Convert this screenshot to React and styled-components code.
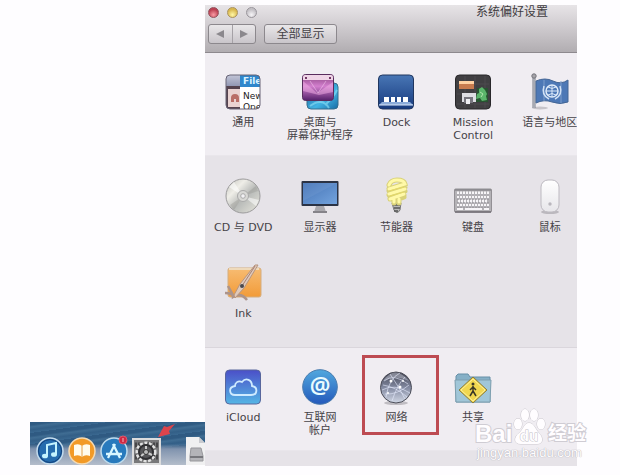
import React from "react";
import styled, { createGlobalStyle, css } from "styled-components";

const GlobalStyle = createGlobalStyle`
  *, *::before, *::after { box-sizing: border-box; }
  body {
    margin: 0;
    background: #fefdff;
    color: #454247;
    font-family: "DejaVu Sans", "Noto Sans CJK SC", sans-serif;
    font-size: 11px;
    overflow: hidden;
  }
  button { font: inherit; color: inherit; border: 0; padding: 0; background: none; }
`;

const Page = styled.main`
  position: relative;
  display: flex;
  align-items: flex-end;
  padding: 5px 43px 9px 30px;
`;

const Window = styled.section`
  flex: 1;
  min-width: 0;
  overflow: hidden;
  background: #e6e3e8;
  padding-bottom: 15px;
`;

const Header = styled.header`
  position: relative;
  height: 48px;
  padding: 1px 3px 0;
  background: linear-gradient(#e7e4e7, #d0ccd0 45%, #b1adb1);
  border-bottom: 1px solid #8d898e;
`;

const TitleBar = styled.div`
  display: flex;
  align-items: center;
  height: 13px;
  gap: 8px;
`;

const Light = styled.button`
  width: 11px;
  height: 11px;
  border-radius: 50%;
  border: 1px solid ${(p) => p.$edge};
  background: radial-gradient(circle at 50% 75%, ${(p) => p.$glow}, ${(p) => p.$tone} 65%);
`;

const Title = styled.h1`
  margin: 0 26px 0 auto;
  font-size: 12px;
  line-height: 13px;
  font-weight: 400;
  white-space: nowrap;
  color: #3f3c41;
`;

const Toolbar = styled.nav`
  display: flex;
  gap: 8px;
  margin-top: 5px;
`;

const control = css`
  height: 20px;
  border: 1px solid #8c888d;
  border-radius: 3px;
  background: linear-gradient(#e9e7e9, #c9c5ca);
`;

const Segmented = styled.div`
  ${control}
  display: flex;
  width: 48px;
`;

const Segment = styled.button`
  flex: 1;
  display: grid;
  place-items: center;
  & + & { border-left: 1px solid #a5a1a6; }
`;

const ShowAll = styled.button`
  ${control}
  width: 73px;
  font-size: 12px;
  line-height: 16px;
`;

const Group = styled.section`
  display: grid;
  grid-template-columns: repeat(5, 1fr);
  margin-right: -11px;
  row-gap: 18px;
  height: ${(p) => (p.$tall ? 192 : 103)}px;
  align-content: start;
  padding-top: ${(p) => (p.$tall ? 22 : 21)}px;
  background: ${(p) => (p.$tall ? "#e6e3e8" : "#f0edf2")};
  border-bottom: 1px solid ${(p) => (p.$tall ? "#dad6dc" : "#e9e6eb")};
`;

const Item = styled.button`
  position: relative;
  display: flex;
  flex-direction: column;
  align-items: center;
  gap: ${(p) => (p.$loose ? 7 : 6)}px;
  ${(p) => p.$marked && css`
    &::after {
      content: "";
      position: absolute;
      inset: -14px -4px 2px 4px;
      border: 3px solid #bd4b52;
    }
  `}
`;

const Label = styled.span`
  min-height: 25px;
  line-height: 13px;
  text-align: center;
  white-space: pre;
`;

const Art = styled.svg`
  display: block;
  width: ${(p) => p.$size || 36}px;
  height: ${(p) => p.$size || 36}px;
  overflow: visible;
`;

const Dock = styled.aside`
  position: relative;
  flex: 0 0 175px;
  display: flex;
  align-items: flex-end;
  gap: 4px;
  height: 43px;
  margin-bottom: 1px;
  padding: 0 0 0 6px;
  overflow: hidden;
  background:
    linear-gradient(transparent 22px, #8093ae 27px, #b4bdcb),
    repeating-linear-gradient(172deg, #2f5a82 0 3px, #406d93 5px, #335f87 8px, #3a6890 11px);
`;

const DockButton = styled.button`
  flex: none;
  display: grid;
  &:last-of-type { margin: 0 0 0 auto; }
`;

const Pointer = styled.svg`
  position: absolute;
  left: 126px;
  top: 1px;
  width: 20px;
  height: 16px;
`;

const Watermark = styled.div`
  position: absolute;
  right: 34px;
  top: 407px;
  width: 111px;
  color: #fffdff;
  font-family: "Liberation Sans", "Noto Sans CJK SC", sans-serif;
  pointer-events: none;
`;

const Brand = styled.div`
  display: flex;
  align-items: flex-end;
  height: 38px;
  font-size: 24px;
  line-height: 22px;
  font-weight: 700;
  -webkit-text-stroke: 2px #cfccd3;
  paint-order: stroke fill;
`;

const BrandCn = styled.span`
  margin-left: auto;
  font-size: 19px;
`;

const Paw = styled.svg`
  width: 34px;
  height: 37px;
  overflow: visible;
  -webkit-text-stroke: 0;
`;

const Site = styled.div`
  padding-left: 2px;
  font-size: 13px;
  line-height: 15px;
  white-space: nowrap;
  text-shadow: 0 0 1px #aaa6ad, 0 0 1px #c3c0c6;
`;

const General = () => (
  <Art viewBox="0 0 36 36">
    <defs>
      <clipPath id="gen"><rect x="1" y="1" width="34" height="34" rx="4" /></clipPath>
      <linearGradient id="genA" x2="0" y2="1"><stop stopColor="#c7cadb" /><stop offset="1" stopColor="#8d93b0" /></linearGradient>
    </defs>
    <g clipPath="url(#gen)">
      <rect width="36" height="36" fill="#fff" />
      <rect width="16" height="13" fill="url(#genA)" />
      <rect x="15" width="21" height="13" fill="#2f86cb" />
      <rect y="12" width="15" height="24" fill="#55434f" />
      <rect x="3" y="15" width="12" height="18" fill="#e9d2d1" />
      <path d="M6 28v-4q0-4 4-4t4 4v4h-3v-3H9v3z" fill="#b96d66" />
      <g fontFamily="DejaVu Sans, sans-serif" fontSize="9" fontWeight="700">
        <text x="18" y="10" fill="#d9f2ff">File</text>
        <text x="18" y="25" fontWeight="400" fill="#222">New</text>
        <text x="18" y="36" fontWeight="400" fill="#222">Ope</text>
      </g>
    </g>
    <rect x="1" y="1" width="34" height="34" rx="4" fill="none" stroke="#686477" />
  </Art>
);

const Desktop = () => (
  <Art viewBox="0 0 36 36">
    <defs>
      <linearGradient id="dtP" x2="0" y2="1"><stop stopColor="#87427f" /><stop offset=".45" stopColor="#d37fce" /><stop offset="1" stopColor="#54206a" /></linearGradient>
      <linearGradient id="dtB" x2="1" y2="1"><stop stopColor="#0c4c8b" /><stop offset=".6" stopColor="#42b4e4" /><stop offset="1" stopColor="#176ba5" /></linearGradient>
    </defs>
    <rect x="5" y="9" width="31" height="26" rx="4" fill="url(#dtB)" stroke="#366e8d" />
    <path d="M8 32Q20 23 27 34M23 31q8-7 12-15" stroke="#90e1f5" strokeWidth="2" fill="none" opacity=".6" />
    <rect x="0.5" y="0.5" width="31" height="26" rx="3" fill="url(#dtP)" stroke="#592d5e" />
    <path d="M1 7l14 12L31 8v10L17 21 1 17z" fill="#f2b0e6" opacity=".5" />
    <path d="M16 19L8 7m8 12L24 7" stroke="#fbd2f5" opacity=".5" />
    <path d="M1 6V3q0-2 2-2h26q2 0 2 2v3z" fill="#efd5e7" />
    <path d="M4 3v2m24-2v2" stroke="#723766" strokeWidth="2" />
  </Art>
);

const DockIcon = () => (
  <Art viewBox="0 0 36 36">
    <defs><linearGradient id="dk" x2="0" y2="1"><stop stopColor="#4876b5" /><stop offset="1" stopColor="#173a7e" /></linearGradient></defs>
    <rect x=".5" y="1" width="35" height="34" rx="4" fill="url(#dk)" stroke="#20365f" />
    <path d="M4 28h28l3 3H1z" fill="#8babd9" />
    <path d="M1 31h34" stroke="#dbe8fa" />
    <path d="M6 23h5v5H6zm7 0h4v5h-4zm6 0h4v5h-4zm6 0h5v5h-5z" fill="#fff" />
  </Art>
);

const Mission = () => (
  <Art viewBox="0 0 36 36">
    <rect x=".5" y="1" width="35" height="34" rx="4" fill="#403f42" stroke="#29282b" />
    <path d="M2 10h32M2 20h32M2 30h32M10 2v32M20 2v32M30 2v32" stroke="#555357" opacity=".6" />
    <path d="M4 7h15v8H4z" fill="#c87b4e" /><path d="M4 7h15v3H4z" fill="#ffd1a2" />
    <path d="M7 19h14v9H7z" fill="#dedee3" /><path d="M9 23h9v6H9z" fill="#77767e" /><path d="M11 25h4v5h-4z" fill="#efeff3" />
    <path d="M22 14h11v14H21z" fill="#275431" />
    <path d="M24 15l3-2 3 3 2 4-1 2 1 4-5 1-2-3-4 1 1-5 2-1z" fill="#5bb56b" />
    <path d="M25 18l3 2-2 3" stroke="#b0e5ad" fill="none" />
  </Art>
);

const Flag = () => (
  <Art viewBox="0 0 36 36">
    <ellipse cx="8" cy="34" rx="8" ry="1.5" fill="#c7c4ca" />
    <path d="M2 4v30" stroke="#777a86" strokeWidth="3" /><path d="M2 4v30" stroke="#d8d9df" />
    <circle cx="2" cy="2" r="2.2" fill="#a6a4a9" stroke="#73727a" />
    <path d="M4 7q9-4 17 0t15-1v22q-8 3-16 0T4 29z" fill="#4d78b6" stroke="#456695" />
    <path d="M29 7v22M12 6v21" stroke="#7e9fcd" strokeWidth="2" opacity=".5" />
    <circle cx="20" cy="17" r="6" fill="none" stroke="#e0ebf9" strokeWidth="1.5" />
    <path d="M14 17h12M20 11v12M16 13q4 3 8 0m-8 8q4-3 8 0" stroke="#dae8fa" fill="none" />
    <path d="M12 12q-3 9 5 13M28 12q3 9-5 13" stroke="#d1e1f5" strokeWidth="1.5" fill="none" />
  </Art>
);

const Disc = () => (
  <Art viewBox="0 0 36 36">
    <defs><linearGradient id="cd" x2="1" y2="1"><stop stopColor="#c0c0ba" /><stop offset=".3" stopColor="#efeee8" /><stop offset=".55" stopColor="#b8bab8" /><stop offset="1" stopColor="#e9e9df" /></linearGradient></defs>
    <circle cx="18" cy="18" r="17" fill="url(#cd)" stroke="#9c9b9c" />
    <path d="M18 18L4 9 9 4zM18 18l13 10 3-6z" fill="#fff" opacity=".55" />
    <path d="M18 18L5 27l4 5zM18 18L31 8l2 5z" fill="#96968f" opacity=".35" />
    <circle cx="18" cy="18" r="5.5" fill="#d8d8d5" stroke="#aaa" />
    <circle cx="18" cy="18" r="2.3" fill="#f2f1f4" stroke="#aaa" />
  </Art>
);

const Display = () => (
  <Art viewBox="0 0 36 36">
    <defs><linearGradient id="ds" x2="1" y2="1"><stop stopColor="#4573b5" /><stop offset="1" stopColor="#73a3dd" /></linearGradient></defs>
    <path d="M14 28h8l2 6H12z" fill="#a9a8ad" /><path d="M11 34h14" stroke="#858389" strokeWidth="2" />
    <rect x="-.5" y="3" width="37" height="25" rx="1" fill="#2b3345" />
    <rect x="1" y="5" width="34" height="21" fill="url(#ds)" />
    <path d="M1 5h34L1 23z" fill="#86acdd" opacity=".2" />
  </Art>
);

const Bulb = () => (
  <Art viewBox="0 0 36 36">
    <path d="M14 25h9l-1 7q-3 5-6 0z" fill="#b8b8b8" stroke="#777" />
    <path d="M15 27h7M16 30h6M16 33h4" stroke="#555" strokeWidth="1.5" />
    <g fill="none" strokeLinecap="round">
      <path d="M11 7q2-5 8-5 7 0 8 4L11 11m0 2l16-4M11 17l16-4M12 21l14-4M16 25V21m5 4v-4l5-2" stroke="#d9d279" strokeWidth="5" />
      <path d="M11 7q2-5 8-5 7 0 8 4L11 11M11 16l16-5M12 21l14-5M16 24v-3m5 3v-3" stroke="#fff9a8" strokeWidth="3" />
      <path d="M11 13l15-4M12 18l14-4" stroke="#e4d968" />
    </g>
  </Art>
);

const Keyboard = () => (
  <Art viewBox="0 0 36 36">
    <rect x="-.5" y="11" width="37" height="23" rx="1" fill="#b4b2b6" stroke="#939095" />
    <path d="M0 12h36" stroke="#77747a" />
    <path d="M2 15h32M2 19h32M3 23h30M2 27h32" stroke="#f7f5f8" strokeWidth="3" strokeDasharray="2 1" />
    <path d="M2 31h6m2 0h17m2 0h5" stroke="#f7f5f8" strokeWidth="2" />
    <path d="M2 17h32M2 21h32M2 25h32M2 29h32" stroke="#8b8890" strokeDasharray="2 1" />
    <path d="M0 34h36" stroke="#706d73" strokeWidth="1.5" />
  </Art>
);

const Mouse = () => (
  <Art viewBox="0 0 36 36">
    <defs><linearGradient id="ms" x2="0" y2="1"><stop stopColor="#fff" /><stop offset="1" stopColor="#e7e6ea" /></linearGradient></defs>
    <ellipse cx="18" cy="34" rx="9" ry="2" fill="#bbb8be" />
    <rect x="9" y="2" width="18" height="32" rx="7" fill="url(#ms)" stroke="#bcb9c0" />
    <circle cx="18" cy="26" r="1.7" fill="#b9b7bd" />
  </Art>
);

const Ink = () => (
  <Art viewBox="0 0 36 36">
    <defs><linearGradient id="ik" x2="0" y2="1"><stop stopColor="#f7bc73" /><stop offset="1" stopColor="#f29b38" /></linearGradient></defs>
    <rect x="3" y="4" width="33" height="29" rx="2" fill="url(#ik)" stroke="#d4ae80" />
    <path d="M4 5h30" stroke="#efdabb" strokeWidth="2" />
    <path d="M0 29q8 0 8 4 8-5 14 3m-19-14l5 9" fill="none" stroke="#ac948b" strokeWidth="2.5" />
    <path d="M30 1l3 0L19 24 10 34 9 31 15 20z" fill="#dfc9ba" stroke="#b8957f" />
    <path d="M30 2L17 22" stroke="#a88072" /><circle cx="17" cy="22" r="2" fill="#49484e" />
  </Art>
);

const ICloud = () => (
  <Art viewBox="0 0 36 36">
    <defs><linearGradient id="ic" x2="0" y2="1"><stop stopColor="#4b4fc8" /><stop offset="1" stopColor="#55b6e5" /></linearGradient></defs>
    <rect x=".5" y="1" width="35" height="34" rx="4" fill="url(#ic)" stroke="#58669c" />
    <path d="M10 26h16c7 0 7-8 1-9 0-6-6-9-10-4-4-2-7 1-7 4-7 1-6 9 0 9z" fill="none" stroke="#cfebff" strokeWidth="1.8" />
  </Art>
);

const Internet = () => (
  <Art viewBox="0 0 36 36">
    <defs><linearGradient id="at" x2="0" y2="1"><stop stopColor="#51a8de" /><stop offset="1" stopColor="#2459bb" /></linearGradient></defs>
    <circle cx="18" cy="18" r="17.3" fill="url(#at)" stroke="#487aad" />
    <text x="18" y="25" textAnchor="middle" fontFamily="Noto Sans, sans-serif" fontWeight="600" fontSize="23" fill="#e9fbff">@</text>
  </Art>
);

const Network = () => (
  <Art viewBox="0 0 36 36">
    <defs><linearGradient id="nw" x2="0" y2="1"><stop stopColor="#424451" /><stop offset=".5" stopColor="#8289a0" /><stop offset="1" stopColor="#d1d7e5" /></linearGradient></defs>
    <ellipse cx="18" cy="34" rx="12" ry="2" fill="#c0bdc3" />
    <circle cx="18" cy="18.5" r="15.5" fill="url(#nw)" stroke="#4d4e59" />
    <path d="M6 12q10-8 24 3M4 21q12-7 28 3M8 28Q11 9 22 4M14 32Q19 16 27 8M12 5q9 13 15 25M5 16q13 2 24 12M7 25q12 1 24-9" fill="none" stroke="#e8edff" opacity=".6" />
    <g fill="#fff"><circle cx="13" cy="12" r="1.5" /><circle cx="22" cy="18" r="1.5" /><circle cx="10" cy="24" r="1" /><circle cx="25" cy="12" r="1" /></g>
    <path d="M5 12Q17-5 31 12 18 5 5 12z" fill="#eef2ff" opacity=".35" />
  </Art>
);

const Sharing = () => (
  <Art viewBox="0 0 36 36">
    <path d="M1 33V7l2-2h10l2 3h20v25z" fill="#86b0c7" stroke="#678fa8" />
    <path d="M0 11h36l-1 22H1z" fill="#a0c6d8" stroke="#7e9faf" />
    <path d="M18 8l14 13-14 13L4 21z" fill="#f1d750" stroke="#8b7c3c" />
    <path d="M18 10l12 11-12 11L6 21z" fill="none" stroke="#fff29b" />
    <circle cx="18" cy="15" r="1.5" fill="#3b3826" />
    <path d="M18 17v5m0-4l-3 3m3-3l3 3m-3 1l-3 5m3-5l3 5" stroke="#3b3826" strokeWidth="1.5" />
  </Art>
);

const groups = [
  { items: [["通用", General], ["桌面与\n屏幕保护程序", Desktop], ["Dock", DockIcon], ["Mission\nControl", Mission], ["语言与地区", Flag]] },
  { tall: true, items: [["CD 与 DVD", Disc], ["显示器", Display], ["节能器", Bulb], ["键盘", Keyboard], ["鼠标", Mouse], ["Ink", Ink]] },
  { items: [["iCloud", ICloud], ["互联网\n帐户", Internet], ["网络", Network, true], ["共享", Sharing]] },
];

const DockApps = () => (
  <Dock aria-label="Dock">
    <DockButton aria-label="iTunes">
      <Art $size={28} viewBox="0 0 28 28">
        <circle cx="14" cy="14" r="13" fill="#246cae" stroke="#c4dbec" strokeWidth="1.5" />
        <circle cx="14" cy="14" r="11.5" fill="none" stroke="#123f79" />
        <path d="M11 19V8l9-2v11" fill="none" stroke="#c4f4ff" strokeWidth="2" />
        <ellipse cx="9" cy="19" rx="3" ry="2.3" fill="#c4f4ff" /><ellipse cx="18" cy="17.5" rx="3" ry="2.3" fill="#c4f4ff" />
      </Art>
    </DockButton>
    <DockButton aria-label="iBooks">
      <Art $size={28} viewBox="0 0 28 28">
        <circle cx="14" cy="14" r="13" fill="#f29a27" stroke="#f5dab2" strokeWidth="1.5" />
        <path d="M6 8q5-2 8 1 3-3 8-1v11q-5-2-8 1-3-3-8-1z" fill="#fffbed" /><path d="M14 9v11" stroke="#e4a14b" />
      </Art>
    </DockButton>
    <DockButton aria-label="App Store">
      <Art $size={28} viewBox="0 0 28 28">
        <circle cx="14" cy="14" r="13" fill="#287abd" stroke="#bddbed" strokeWidth="1.5" />
        <path d="M8 21l7-14m-2 0l7 14M6 17h16" stroke="#d8f6ff" strokeWidth="2.3" fill="none" />
        <circle cx="23" cy="3" r="4" fill="#cf2944" stroke="#d9596c" /><path d="M23 1v4" stroke="#f3b6be" />
      </Art>
    </DockButton>
    <DockButton aria-label="System Preferences">
      <Art $size={28} viewBox="0 0 28 28">
        <rect x="1" y="2" width="27" height="25" fill="#78787a" stroke="#dcdcdd" strokeWidth="2" />
        <path d="M3 8h23M3 20h23" stroke="#464648" strokeWidth="5" strokeDasharray="2 1" />
        <circle cx="14" cy="15" r="9" fill="none" stroke="#e2e2e2" strokeWidth="3" strokeDasharray="3 1.5" />
        <circle cx="14" cy="15" r="7" fill="#57575a" stroke="#303033" strokeWidth="2" />
        <path d="M14 9v6l-5 4m5-4l6 3" stroke="#cecece" strokeWidth="2" fill="none" />
        <circle cx="14" cy="15" r="2.5" fill="#bbb" stroke="#333" />
      </Art>
    </DockButton>
    <DockButton aria-label="Disk image">
      <Art $size={28} viewBox="5 0 19 28" preserveAspectRatio="xMaxYMid meet">
        <path d="M5 0h13l6 6v22H5z" fill="#f0f0f1" /><path d="M18 0v6h6" fill="#c9cbd0" />
        <path d="M10 11h10l2 8v5H9v-5z" fill="#b4b4b8" stroke="#96969b" /><path d="M9 20h13" stroke="#77777c" strokeWidth="2" />
      </Art>
    </DockButton>
    <Pointer viewBox="0 0 20 16"><path d="M19 1L11 4 8 3 2 14l12-3-1-3z" fill="#dc444c" /></Pointer>
  </Dock>
);

export default function App() {
  return (
    <>
      <GlobalStyle />
      <Page>
        <DockApps />
        <Window>
          <Header>
            <TitleBar>
              <Light aria-label="关闭" $edge="#93515c" $tone="#bb4052" $glow="#fa9ba4" />
              <Light aria-label="最小化" $edge="#aa925b" $tone="#d9b84f" $glow="#fff7a6" />
              <Light aria-label="缩放" $edge="#99959b" $tone="#c4c1c6" $glow="#f6f4f7" />
              <Title>系统偏好设置</Title>
            </TitleBar>
            <Toolbar>
              <Segmented>
                <Segment aria-label="后退"><svg width="8" height="8"><path d="M8 0v8L0 4z" fill="#8b888d" /></svg></Segment>
                <Segment aria-label="前进"><svg width="8" height="8"><path d="M0 0v8l8-4z" fill="#8b888d" /></svg></Segment>
              </Segmented>
              <ShowAll>全部显示</ShowAll>
            </Toolbar>
          </Header>
          {groups.map((group, i) => (
            <Group key={i} $tall={group.tall}>
              {group.items.map(([name, Icon, marked]) => (
                <Item key={name} $marked={marked} $loose={group.tall}>
                  <Icon />
                  <Label>{name}</Label>
                </Item>
              ))}
            </Group>
          ))}
        </Window>
        <Watermark>
          <Brand>
            <span>Bai</span>
            <Paw viewBox="0 0 34 37">
              <g fill="#fffdff" stroke="#cbc8ce">
                <ellipse cx="6" cy="16" rx="4" ry="5.5" /><ellipse cx="13" cy="7" rx="4" ry="6" /><ellipse cx="22" cy="7" rx="4" ry="6" /><ellipse cx="29" cy="16" rx="4" ry="5.5" />
                <path d="M17 15c5 0 6 6 10 10s5 11-2 11H9c-8 0-7-7-2-11s5-10 10-10z" />
              </g>
              <text x="17" y="33" textAnchor="middle" fontSize="15" fill="#fffdff" stroke="#c1bdc5">du</text>
            </Paw>
            <BrandCn>经验</BrandCn>
          </Brand>
          <Site>jingyan.baidu.com</Site>
        </Watermark>
      </Page>
    </>
  );
}
